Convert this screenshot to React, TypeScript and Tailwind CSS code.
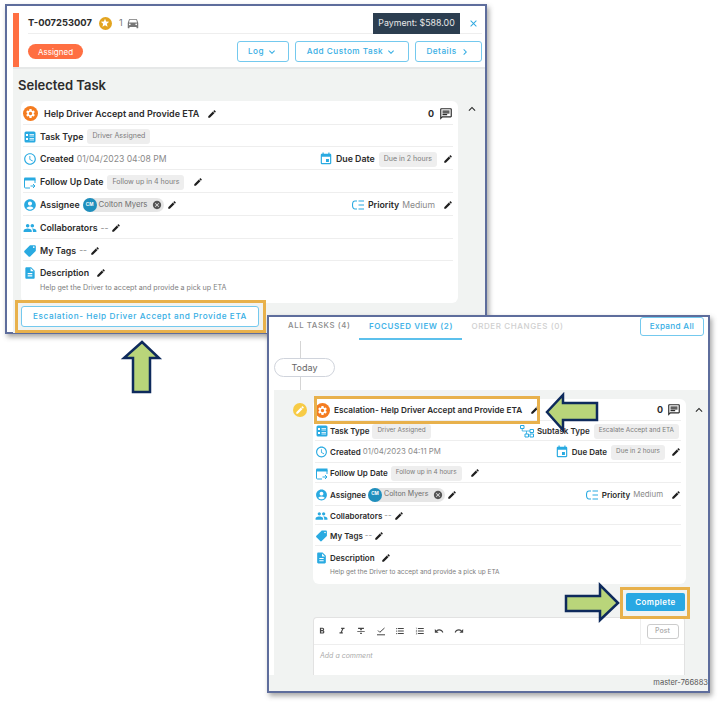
import * as React from 'react';
import {
  MdAccessTime,
  MdAccountCircle,
  MdCancel,
  MdChevronRight,
  MdClose,
  MdDescription,
  MdDirectionsCar,
  MdEdit,
  MdEvent,
  MdExpandLess,
  MdExpandMore,
  MdFormatBold,
  MdFormatItalic,
  MdFormatListBulleted,
  MdFormatListNumbered,
  MdFormatStrikethrough,
  MdGroup,
  MdLocalOffer,
  MdOutlineChat,
  MdRedo,
  MdSettings,
  MdStar,
  MdUndo,
} from 'react-icons/md';

const BLUE = 'text-[#29aae1]';

function Pencil({ className = '' }: { className?: string }) {
  return <MdEdit size={10} className={`shrink-0 text-[#1f1f1f] ${className}`} />;
}

// sizes are em based so the narrower card in the second window scales with it
function Chip({ children, className = '' }: { children: React.ReactNode; className?: string }) {
  return (
    <span className={`flex h-[15px] items-center rounded-[3px] bg-[#eeeeee] px-[5px] text-[0.8em] text-[#7c7c7c] ${className}`}>
      {children}
    </span>
  );
}

function Label({ children }: { children: React.ReactNode }) {
  return <span className="font-semibold text-[#2c2c2c]">{children}</span>;
}

function Value({ children }: { children: React.ReactNode }) {
  return <span className="text-[0.98em] text-[#8a8a8a]">{children}</span>;
}

function TaskTypeIcon() {
  return (
    <svg width="12" height="12" viewBox="0 0 12 12" className="shrink-0">
      <rect x="0.5" y="0.5" width="11" height="11" rx="1.5" fill="#29aae1" />
      <path d="M2 3h2v2H2zM2 7h2v2H2z" fill="#fff" />
      <path d="M5.5 3.5h4.5M5.5 5h4.5M5.5 7.5h4.5M5.5 9h4.5" stroke="#fff" strokeWidth="0.8" />
    </svg>
  );
}

function FollowUpIcon() {
  return (
    <svg width="12" height="13" viewBox="0 0 12 13" fill="none" className="shrink-0">
      <path d="M6 12H1.5a1 1 0 0 1-1-1V2.5h9.5a1 1 0 0 1 1 1V7" stroke="#29aae1" />
      <path d="M0.5 1.5h11v3H.5z" fill="#29aae1" />
      <path d="M6.5 10h4M9 8l2 2-2 2" stroke="#29aae1" strokeWidth="1" />
    </svg>
  );
}

function PriorityIcon() {
  return (
    <svg width="13" height="10" viewBox="0 0 13 10" fill="none" className="shrink-0">
      <path d="M5 1H3a2.5 4 0 0 0 0 8h2" stroke="#29aae1" strokeWidth="1.1" />
      <path d="M6.5 1H12M6.5 5H12M6.5 9H12" stroke="#29aae1" strokeWidth="1.1" />
    </svg>
  );
}

function SubtaskIcon() {
  return (
    <svg width="14" height="13" viewBox="0 0 14 13" fill="none" className="shrink-0">
      <path d="M.5.5h3.500v3H.5zM5 9h3.500v3H5zM10 4.500h3.500v3H10zM10 9h3.500v3H10z" stroke="#29aae1" />
      <path d="M2.200 3.500V6H10M6.500 6v3" stroke="#29aae1" strokeWidth="0.8" />
    </svg>
  );
}

function CheckLineIcon() {
  return (
    <svg width="10" height="10" viewBox="0 0 10 10" fill="none">
      <path d="M2 4.500l1.800 1.800L8.500 2M1 8.800h8" stroke="#444" strokeWidth="1" />
    </svg>
  );
}

function Row({ wide, height, children }: { wide?: boolean; height: string; children: React.ReactNode }) {
  return (
    <div className={`flex items-center border-b border-[#eeeeee] ${height} ${wide ? 'gap-[2px] pt-[1px]' : 'gap-[3px] pt-[2px]'}`}>
      {children}
    </div>
  );
}

// fixed slot so all row labels start on the same x
function IconSlot({ wide, children }: { wide?: boolean; children: React.ReactNode }) {
  return <span className={`flex shrink-0 items-center justify-center ${wide ? 'w-[13px]' : 'w-[14px]'}`}>{children}</span>;
}

function Assignee() {
  return (
    <span className="flex h-[14px] items-center rounded-full bg-[#e6e6e6] pr-[2px] text-[0.88em] text-[#6f6f6f]">
      <span className="flex h-[14px] w-[14px] items-center justify-center rounded-full bg-[#1f8fbd] text-[4.500px] font-bold text-white">
        CM
      </span>
      <span className="ml-[2px] mr-[5px]">Colton Myers</span>
      <MdCancel size={10} className="text-[#555555]" />
    </span>
  );
}

function TaskCard({
  wide,
  title,
  created,
  due,
}: {
  wide?: boolean;
  title: React.ReactNode;
  created: string;
  due: string;
}) {
  const h = wide
    ? ['h-[22px]', 'h-[20px]', 'h-[22px]', 'h-[20px]', 'h-[23px]', 'h-[19px]', 'h-[21px]']
    : ['h-[24px]', 'h-[22px]', 'h-[23px]', 'h-[23px]', 'h-[23px]', 'h-[23px]', 'h-[22px]'];
  return (
    <div className={`flex flex-col rounded-[6px] bg-white pl-[2px] pr-[5px] ${wide ? 'h-[185px] w-[373px] text-[8px]' : 'h-[202px] w-[437px] text-[8.800px]'}`}>
      <Row wide={wide} height={h[0]}>
        <span className="flex h-[15px] w-[15px] shrink-0 items-center justify-center rounded-full bg-[#f47c20]">
          <MdSettings size={11} className="text-white" />
        </span>
        <span className={`font-semibold text-[#2c2c2c] ${wide ? 'ml-[2px] text-[8.200px]' : 'ml-[3px] text-[9px]'}`}>{title}</span>
        <Pencil className={wide ? 'ml-[6px]' : 'ml-[5px]'} />
        <span className="ml-auto text-[9px] font-bold text-[#2c2c2c]">0</span>
        <MdOutlineChat size={14} className="ml-[2px] text-[#2c2c2c]" />
      </Row>
      <Row wide={wide} height={h[1]}>
        <IconSlot wide={wide}><TaskTypeIcon /></IconSlot>
        <Label>Task Type</Label>
        <Chip className="ml-[1px]">Driver Assigned</Chip>
        {wide && (
          <span className="ml-auto mr-[2px] flex items-center gap-[3px]">
            <SubtaskIcon />
            <Label>Subtask Type</Label>
            <Chip className="ml-[1px]">Escalate Accept and ETA</Chip>
          </span>
        )}
      </Row>
      <Row wide={wide} height={h[2]}>
        <IconSlot wide={wide}><MdAccessTime size={14} className={BLUE} /></IconSlot>
        <Label>Created</Label>
        <Value>{created}</Value>
        <span className="ml-auto flex items-center gap-[3px]">
          <MdEvent size={14} className={BLUE} />
          <Label>Due Date</Label>
          <Chip className="ml-[1px]">{due}</Chip>
          <Pencil className="ml-[3px]" />
        </span>
      </Row>
      <Row wide={wide} height={h[3]}>
        <IconSlot wide={wide}><FollowUpIcon /></IconSlot>
        <Label>Follow Up Date</Label>
        <Chip className="ml-[1px]">Follow up in 4 hours</Chip>
        <Pencil className="ml-[6px]" />
      </Row>
      <Row wide={wide} height={h[4]}>
        <IconSlot wide={wide}><MdAccountCircle size={14} className={BLUE} /></IconSlot>
        <Label>Assignee</Label>
        <Assignee />
        <Pencil />
        <span className="ml-auto flex items-center gap-[3px]">
          <PriorityIcon />
          <Label>Priority</Label>
          <Value>Medium</Value>
          <Pencil className="ml-[5px]" />
        </span>
      </Row>
      <Row wide={wide} height={h[5]}>
        <IconSlot wide={wide}><MdGroup size={14} className={BLUE} /></IconSlot>
        <Label>Collaborators</Label>
        <Value>--</Value>
        <Pencil />
      </Row>
      <Row wide={wide} height={h[6]}>
        <IconSlot wide={wide}><MdLocalOffer size={14} className={`${BLUE} -scale-x-100`} /></IconSlot>
        <Label>My Tags</Label>
        <Value>--</Value>
        <Pencil />
      </Row>
      <div className={`flex items-center pt-[5px] ${wide ? 'gap-[2px]' : 'gap-[3px]'}`}>
        <IconSlot wide={wide}><MdDescription size={14} className={BLUE} /></IconSlot>
        <Label>Description</Label>
        <Pencil className="ml-[4px]" />
      </div>
      <p className={`mt-[3px] text-[0.81em] text-[#7d7d7d] ${wide ? 'ml-[15px]' : 'ml-[17px]'}`}>
        Help get the Driver to accept and provide a pick up ETA
      </p>
    </div>
  );
}

function OutlineButton({ children, className = '' }: { children: React.ReactNode; className?: string }) {
  return (
    <button className={`flex h-[21px] items-center justify-center rounded-[3px] border border-[#74c9ee] bg-white text-[8.200px] font-medium tracking-[0.5px] text-[#36aee4] ${className}`}>
      {children}
    </button>
  );
}

function FirstWindow() {
  return (
    <div className="absolute left-[5px] top-[4px] h-[330px] w-[482px] border-2 border-[#5e6d9c] bg-white pl-[6px] pt-[7px] shadow-[2px_3px_5px_rgba(60,60,60,0.45)]">
      <div className="flex h-[56px] border-b-2 border-[#e6e8e8]">
        <div className="w-[6px] bg-[#ff6f42]" />
        <div className="flex-1 pl-[9px] pr-[3px]">
          <div className="flex h-[21px] items-center border-b border-[#eeeeee]">
            <span className="text-[9.400px] font-bold text-[#2c2c2c]">T-007253007</span>
            <span className="ml-[7px] flex h-[13px] w-[13px] items-center justify-center rounded-full bg-[#e3a41f]">
              <MdStar size={10} className="text-white" />
            </span>
            <span className="ml-[7px] text-[9px] text-[#777777]">1</span>
            <MdDirectionsCar size={14} className="ml-[3px] text-[#777777]" />
            <span className="ml-auto flex h-[21px] w-[87px] items-center justify-center bg-[#2c3e50] text-[8.800px] text-[#e8e8e8]">
              Payment: $588.00
            </span>
            <MdClose size={11} className="ml-[8px] mr-[3px] text-[#2da8e0]" />
          </div>
          <div className="flex items-center pt-[7px]">
            <span className="flex h-[15px] w-[55px] items-center justify-center rounded-full bg-[#ff6f42] text-[8px] text-white">Assigned</span>
            <div className="ml-auto flex gap-[6px]">
              <OutlineButton className="w-[52px]">Log<MdExpandMore size={12} className="ml-[2px]" /></OutlineButton>
              <OutlineButton className="w-[114px]">Add Custom Task<MdExpandMore size={12} className="ml-[2px]" /></OutlineButton>
              <OutlineButton className="w-[67px]">Details<MdChevronRight size={12} className="ml-[2px]" /></OutlineButton>
            </div>
          </div>
        </div>
      </div>
      <div className="h-[264px] bg-[#f1f3f2] pl-[8px]">
        <h2 className="-ml-[3px] pt-[8px] text-[13px] font-semibold leading-[16px] text-[#2c2c2c]">Selected Task</h2>
        <div className="mt-[8px] flex items-start">
          <TaskCard title="Help Driver Accept and Provide ETA" created="01/04/2023 04:08 PM" due="Due in 2 hours" />
          <MdExpandLess size={14} className="ml-[7px] mt-[1px] text-[#2c2c2c]" />
        </div>
        <OutlineButton className="mt-[3px] w-[238px] tracking-[0.6px]">Escalation- Help Driver Accept and Provide ETA</OutlineButton>
      </div>
    </div>
  );
}

function Toolbar() {
  const cls = 'text-[#444444]';
  return (
    <div className="flex h-[27px] border-b border-[#eeeeee]">
      <div className="flex flex-1 items-center gap-[9.500px] pl-[3px]">
        <MdFormatBold size={10} className={cls} />
        <MdFormatItalic size={10} className={cls} />
        <MdFormatStrikethrough size={10} className={cls} />
        <CheckLineIcon />
        <MdFormatListBulleted size={10} className={cls} />
        <MdFormatListNumbered size={10} className={cls} />
        <MdUndo size={10} className={cls} />
        <MdRedo size={10} className={cls} />
      </div>
      <div className="flex w-[44px] items-center justify-center border-l border-[#eeeeee]">
        <span className="flex h-[15px] w-[32px] items-center justify-center rounded-[3px] border border-[#cccccc] text-[7px] font-medium text-[#aaaaaa]">Post</span>
      </div>
    </div>
  );
}

function SecondWindow() {
  return (
    <div className="absolute left-[267px] top-[315px] flex h-[378px] w-[443px] flex-col border-2 border-[#5e6d9c] bg-white shadow-[2px_3px_5px_rgba(60,60,60,0.45)]">
      <div className="flex h-[24px] items-start pl-[9px] pr-[4px]">
        <span className="pl-[10px] pr-[9px] pt-[3px] text-[7.800px] font-medium tracking-[0.6px] text-[#8a8a8a]">ALL TASKS (4)</span>
        <span className="h-[23px] w-[103px] border-b-2 border-[#5cc0ec] pt-[3px] text-center text-[8px] font-semibold tracking-[0.6px] text-[#45b4e8]">FOCUSED VIEW (2)</span>
        <span className="px-[9px] pt-[3px] text-[8px] font-medium tracking-[0.6px] text-[#d0d0d0]">ORDER CHANGES (0)</span>
        <OutlineButton className="ml-auto !h-[19px] w-[64px] !tracking-[0.3px]">Expand All</OutlineButton>
      </div>
      <div className="ml-[5px] flex h-[49px] flex-col items-start pl-[26px]">
        <span className="h-[17px] w-px bg-[#d5d5d5]" />
        <span className="-ml-[26px] flex h-[19px] w-[61px] shrink-0 items-center justify-center rounded-full border border-[#d0d4dc] text-[9px] text-[#666666]">Today</span>
        <span className="h-[13px] w-px bg-[#d5d5d5]" />
      </div>
      <div className="ml-[5px] flex flex-1 flex-col bg-[#f1f3f2] pl-[19px] pt-[9px]">
        <div className="flex items-start">
          <span className="mr-[6px] mt-[4px] flex h-[14px] w-[14px] items-center justify-center rounded-full bg-[#f7cb46]">
            <MdEdit size={10} className="text-white" />
          </span>
          <TaskCard
            wide
            title="Escalation- Help Driver Accept and Provide ETA"
            created="01/04/2023 04:11 PM"
            due="Due in 2 hours"
          />
          <MdExpandLess size={14} className="ml-[6px] mt-[4px] text-[#2c2c2c]" />
        </div>
        <div className="ml-[20px] mt-[9px] flex w-[372px] justify-end">
          <button className="h-[18px] w-[59px] rounded-[2px] bg-[#29a8e3] text-[8px] font-semibold tracking-[0.4px] text-white">Complete</button>
        </div>
        <div className="ml-[20px] mt-[6px] h-[58px] w-[372px] rounded-t-[4px] border border-b-0 border-[#e2e2e2] bg-white">
          <Toolbar />
          <p className="pl-[6px] pt-[6px] text-[7px] italic text-[#aaaaaa]">Add a comment</p>
        </div>
      </div>
      <div className="flex h-[16px] shrink-0 items-center justify-end overflow-hidden whitespace-nowrap bg-[#f1f3f2] text-[7.500px] text-[#555555]">master-766883</div>
    </div>
  );
}

function Arrow({ points }: { points: string }) {
  return (
    <svg viewBox="0 0 721 703" className="absolute inset-0 h-[703px] w-[721px]">
      <polygon points={points} fill="#b9d57a" stroke="#0e2a5c" strokeWidth="2.5" />
    </svg>
  );
}

export default function App() {
  return (
    <div className="relative h-[703px] w-[721px] overflow-hidden bg-white font-['Inter','Liberation_Sans',sans-serif]">
      <FirstWindow />
      <SecondWindow />
      {/* callouts sit on top of both windows */}
      <div className="absolute left-[15px] top-[300px] h-[33px] w-[251px] border-[3px] border-[#e8b14c]" />
      <div className="absolute left-[314px] top-[396px] h-[28px] w-[226px] border-[3px] border-[#e8b14c]" />
      <div className="absolute left-[620px] top-[587px] h-[32px] w-[70px] border-[3px] border-[#e8b14c]" />
      <Arrow points="142,342 159,358 150,358 150,392 133,392 133,358 124,358" />
      <Arrow points="547,412 563,395 563,403 597,403 597,420 563,420 563,430" />
      <Arrow points="618,603 600,585 600,596 566,596 566,611 600,611 600,620" />
    </div>
  );
}
